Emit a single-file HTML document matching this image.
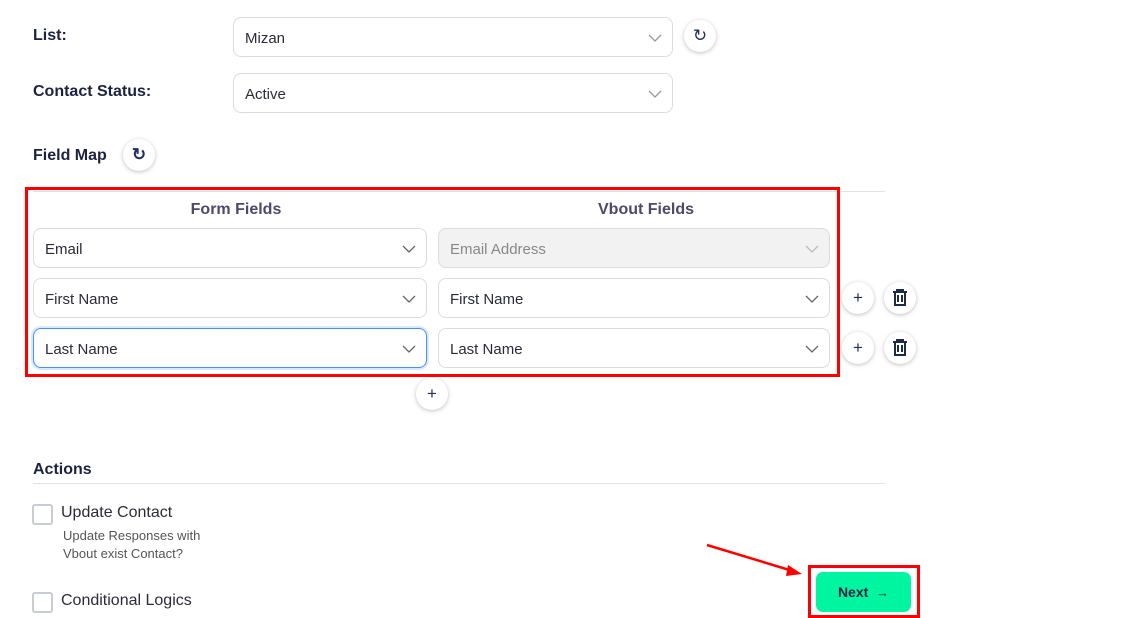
<!DOCTYPE html>
<html><head><style>
body{margin:0;width:1133px;height:615px;background:#fff;position:relative;overflow:hidden;font-family:"Liberation Sans",sans-serif;color:#1d2240}
.a{position:absolute}
.lbl{font-size:16px;font-weight:bold;color:#1d2240}
.sel{position:absolute;box-sizing:border-box;border:1px solid #dcdcdc;border-radius:8px;height:40px;background:#fff;font-size:15px;color:#2b2b3a;padding-left:11px;line-height:41px}
.sel svg{position:absolute;right:10px;top:15px}
.circ{position:absolute;width:32px;height:32px;border-radius:50%;background:#fff;box-shadow:0 1px 4px rgba(0,0,0,.25);display:flex;align-items:center;justify-content:center;color:#1d3060;font-size:17px}
.cb{position:absolute;width:17px;height:17px;border:2px solid #c9ccd2;border-radius:3px}
</style></head><body>
<div class="a lbl" style="left:33px;top:27px">List:</div>
<div class="sel" style="left:233px;top:17px;width:440px">Mizan<svg width="14" height="10"><path d="M1 2l6 6 6-6" fill="none" stroke="#999" stroke-width="1.3"/></svg></div>
<div class="circ" style="left:684px;top:20px">↻</div>
<div class="a lbl" style="left:33px;top:83px">Contact Status:</div>
<div class="sel" style="left:233px;top:73px;width:440px">Active<svg width="14" height="10"><path d="M1 2l6 6 6-6" fill="none" stroke="#999" stroke-width="1.3"/></svg></div>
<div class="a lbl" style="left:33px;top:147px">Field Map</div>
<div class="circ" style="left:123px;top:139px;font-weight:bold">↻</div>
<div class="a" style="left:33px;top:191px;width:852px;height:1px;background:#e2e2e2"></div>
<div class="a" style="left:25px;top:187px;width:809px;height:184px;border:3px solid #f00"></div>
<div class="a" style="left:136px;top:201px;width:200px;text-align:center;font-size:16px;font-weight:bold;color:#4b4a6b">Form Fields</div>
<div class="a" style="left:546px;top:201px;width:200px;text-align:center;font-size:16px;font-weight:bold;color:#4b4a6b">Vbout Fields</div>
<div class="sel" style="left:33px;top:228px;width:394px">Email<svg width="14" height="10"><path d="M1 2l6 6 6-6" fill="none" stroke="#666" stroke-width="1.3"/></svg></div>
<div class="sel" style="left:438px;top:228px;width:392px;background:#f2f2f2;color:#888">Email Address<svg width="14" height="10"><path d="M1 2l6 6 6-6" fill="none" stroke="#bbb" stroke-width="1.3"/></svg></div>
<div class="sel" style="left:33px;top:278px;width:394px">First Name<svg width="14" height="10"><path d="M1 2l6 6 6-6" fill="none" stroke="#666" stroke-width="1.3"/></svg></div>
<div class="sel" style="left:438px;top:278px;width:392px">First Name<svg width="14" height="10"><path d="M1 2l6 6 6-6" fill="none" stroke="#666" stroke-width="1.3"/></svg></div>
<div class="sel" style="left:33px;top:328px;width:394px;border-color:#4a90ff;box-shadow:0 0 0 2px #dbe9ff">Last Name<svg width="14" height="10"><path d="M1 2l6 6 6-6" fill="none" stroke="#666" stroke-width="1.3"/></svg></div>
<div class="sel" style="left:438px;top:328px;width:392px">Last Name<svg width="14" height="10"><path d="M1 2l6 6 6-6" fill="none" stroke="#666" stroke-width="1.3"/></svg></div>
<div class="circ" style="left:842px;top:282px">+</div>
<div class="circ" style="left:884px;top:282px"><svg width="16" height="18"><path d="M1 3h14M5 3V1h6v2M3 3v13h10V3M6 6v7M10 6v7" fill="none" stroke="#1d2a4a" stroke-width="2"/></svg></div>
<div class="circ" style="left:842px;top:332px">+</div>
<div class="circ" style="left:884px;top:332px"><svg width="16" height="18"><path d="M1 3h14M5 3V1h6v2M3 3v13h10V3M6 6v7M10 6v7" fill="none" stroke="#1d2a4a" stroke-width="2"/></svg></div>
<div class="circ" style="left:416px;top:378px">+</div>
<div class="a lbl" style="left:33px;top:461px">Actions</div>
<div class="a" style="left:33px;top:483px;width:852px;height:1px;background:#e2e2e2"></div>
<div class="cb" style="left:32px;top:504px"></div>
<div class="a" style="left:61px;top:504px;font-size:16px;color:#2b2b3a">Update Contact</div>
<div class="a" style="left:63px;top:527px;font-size:13px;color:#555;line-height:18px">Update Responses with<br>Vbout exist Contact?</div>
<div class="cb" style="left:32px;top:592px"></div>
<div class="a" style="left:61px;top:592px;font-size:16px;color:#2b2b3a">Conditional Logics</div>
<svg class="a" style="left:700px;top:540px" width="110" height="40"><path d="M7 5L96 32" stroke="#f00" stroke-width="2.5"/><path d="M102 34L88 25L86 36Z" fill="#f00"/></svg>
<div class="a" style="left:808px;top:565px;width:106px;height:47px;border:3px solid #f00"></div>
<div class="a" style="left:816px;top:572px;width:95px;height:40px;border-radius:7px;background:#00f5a0;font-size:14px;font-weight:bold;color:#1d2240;display:flex;align-items:center;justify-content:center">Next&nbsp;&nbsp;<span style="font-weight:normal;font-size:13px">→</span></div>
</body></html>
